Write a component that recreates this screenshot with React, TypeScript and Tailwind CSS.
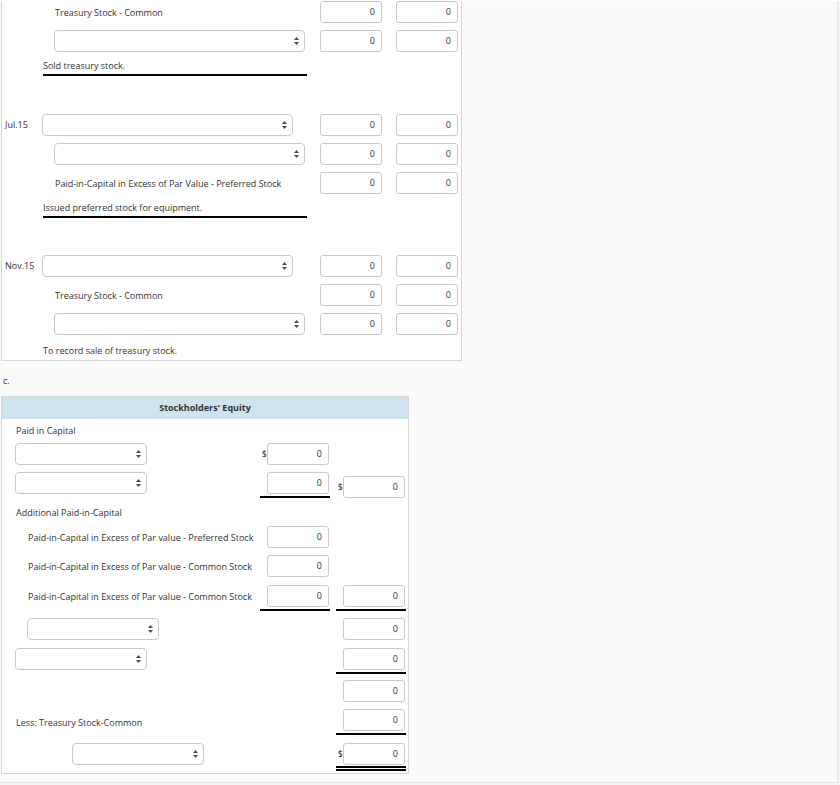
import React from 'react';

// tiny up/down select arrow
const Arrows = () => (
  <svg width="5" height="8" viewBox="0 0 5 8" className="shrink-0">
    <path d="M2.5 0 L5 3 H0 Z" fill="#4a4a4a" />
    <path d="M0 5 H5 L2.5 8 Z" fill="#4a4a4a" />
  </svg>
);

const Select = ({ w }: { w: string }) => (
  <div className={`${w} h-[22px] bg-white border border-[#c8c8c8] rounded-[4px] flex items-center justify-end pr-[5px]`}>
    <Arrows />
  </div>
);

const Num = () => (
  <div className="w-[62px] h-[22px] bg-white border border-[#c8c8c8] rounded-[3px] flex items-center justify-end pr-[6px] text-[9px] text-[#333]">
    0
  </div>
);

type Line = { kind: 'select' | 'text'; credit: boolean; label?: string };
type Entry = { date?: string; lines: Line[]; desc: string; rule: boolean; mt: string };

const ENTRIES: Entry[] = [
  {
    mt: 'mt-[1px]',
    lines: [
      { kind: 'text', credit: true, label: 'Treasury Stock - Common' },
      { kind: 'select', credit: true },
    ],
    desc: 'Sold treasury stock.',
    rule: true,
  },
  {
    mt: 'mt-[38px]',
    date: 'Jul.15',
    lines: [
      { kind: 'select', credit: false },
      { kind: 'select', credit: true },
      { kind: 'text', credit: true, label: 'Paid-in-Capital in Excess of Par Value - Preferred Stock' },
    ],
    desc: 'Issued preferred stock for equipment.',
    rule: true,
  },
  {
    mt: 'mt-[37px]',
    date: 'Nov.15',
    lines: [
      { kind: 'select', credit: false },
      { kind: 'text', credit: true, label: 'Treasury Stock - Common' },
      { kind: 'select', credit: true },
    ],
    desc: 'To record sale of treasury stock.',
    rule: false,
  },
];

const JournalEntry = ({ e }: { e: Entry }) => (
  <div className={e.mt}>
    {e.lines.map((l, i) => (
      <div key={i} className={`flex items-center h-[22px] ${i > 0 ? 'mt-[7px]' : ''}`}>
        <div className="w-[40px] pl-[3px]">{i === 0 ? e.date : ''}</div>
        <div className="w-[278px] flex items-center">
          {l.kind === 'select' ? (
            <div className={l.credit ? 'ml-[12px]' : ''}>
              <Select w="w-[251px]" />
            </div>
          ) : (
            <span className={`${l.credit ? 'pl-[13px]' : 'pl-[1px]'} pt-[1px]`}>{l.label}</span>
          )}
        </div>
        <Num />
        <div className="ml-[14px]">
          <Num />
        </div>
      </div>
    ))}
    <div className="flex mt-[7px]">
      <div className="w-[40px]" />
      {e.rule ? (
        <div className="ml-[1px] w-[264px] h-[17px] border-b-2 border-black">{e.desc}</div>
      ) : (
        <div className="ml-[1px] w-[264px] h-[17px] pt-[2px]">{e.desc}</div>
      )}
    </div>
  </div>
);

// Stockholders' equity statement cells
const Cell = ({ dollar, rule }: { dollar?: boolean; rule?: 'single' | 'double' }) => (
  <div
    className={`w-[70px] flex items-center justify-between ${
      rule === 'single' ? 'border-b-2 border-black pb-[2px]' : rule === 'double' ? 'border-b-[5px] border-double border-black pb-[1px]' : ''
    }`}
  >
    <span className="pl-[2px] text-[8px] font-semibold text-[#444]">{dollar ? '$' : ''}</span>
    <div className="pr-[1px]">
      <Num />
    </div>
  </div>
);

const Empty = () => <div className="w-[70px]" />;

export default function App() {
  return (
    <div className="min-h-[785px] bg-[#f3f3f3] font-['Open_Sans',sans-serif] text-[9px] leading-[14px] text-[#333]">
      <div className="w-[838px] h-[782px] bg-[#fafafa] border-r border-b border-[#e2e2e2]">
        {/* journal panel */}
        <div className="ml-[1px] w-[461px] bg-white border-l border-r border-b border-[#d6d6d6] pr-[3px] pb-[1px]">
          {ENTRIES.map((e, i) => (
            <JournalEntry key={i} e={e} />
          ))}
        </div>

        <div className="mt-[13px] pl-[3px] h-[14px]">c.</div>

        {/* stockholders' equity */}
        <div className="mt-[8px] ml-[1px] w-[408px] bg-white border border-[#d6d6d6] pb-[2px]">
          <div className="h-[22px] bg-[#cde3ed] flex items-center justify-center font-bold">Stockholders' Equity</div>

          <div className="mt-[4px] pl-[14px] h-[14px] pt-[1px]">Paid in Capital</div>

          <div className="mt-[6px] flex items-end">
            <div className="w-[258px] pl-[13px]">
              <Select w="w-[132px]" />
            </div>
            <Cell dollar />
            <div className="w-[6px]" />
            <Empty />
          </div>

          <div className="mt-[7px] flex items-end">
            <div className="w-[258px] pl-[13px] self-start">
              <Select w="w-[132px]" />
            </div>
            <Cell rule="single" />
            <div className="w-[6px]" />
            <Cell dollar />
          </div>

          <div className="mt-[8px] pl-[14px] h-[14px]">Additional Paid-in-Capital</div>

          <div className="mt-[6px] flex items-center">
            <div className="w-[258px] pl-[26px] pt-[1px]">Paid-in-Capital in Excess of Par value - Preferred Stock</div>
            <Cell />
            <div className="w-[6px]" />
            <Empty />
          </div>

          <div className="mt-[7px] flex items-center">
            <div className="w-[258px] pl-[26px] pt-[1px]">Paid-in-Capital in Excess of Par value - Common Stock</div>
            <Cell />
            <div className="w-[6px]" />
            <Empty />
          </div>

          <div className="mt-[8px] flex items-start">
            <div className="w-[258px] pl-[26px] h-[22px] flex items-center pt-[2px]">Paid-in-Capital in Excess of Par value - Common Stock</div>
            <Cell rule="single" />
            <div className="w-[6px]" />
            <Cell rule="single" />
          </div>

          <div className="mt-[7px] flex items-center">
            <div className="w-[258px] pl-[25px]">
              <Select w="w-[132px]" />
            </div>
            <Empty />
            <div className="w-[6px]" />
            <Cell />
          </div>

          <div className="mt-[8px] flex items-start">
            <div className="w-[258px] pl-[13px]">
              <Select w="w-[132px]" />
            </div>
            <Empty />
            <div className="w-[6px]" />
            <Cell rule="single" />
          </div>

          <div className="mt-[6px] flex items-center">
            <div className="w-[258px]" />
            <Empty />
            <div className="w-[6px]" />
            <Cell />
          </div>

          <div className="mt-[7px] flex items-start">
            <div className="w-[258px] pl-[14px] h-[22px] flex items-center pt-[5px]">Less: Treasury Stock-Common</div>
            <Empty />
            <div className="w-[6px]" />
            <Cell rule="single" />
          </div>

          <div className="mt-[8px] flex items-start">
            <div className="w-[258px] pl-[70px]">
              <Select w="w-[132px]" />
            </div>
            <Empty />
            <div className="w-[6px]" />
            <Cell dollar rule="double" />
          </div>
        </div>
      </div>
    </div>
  );
}
